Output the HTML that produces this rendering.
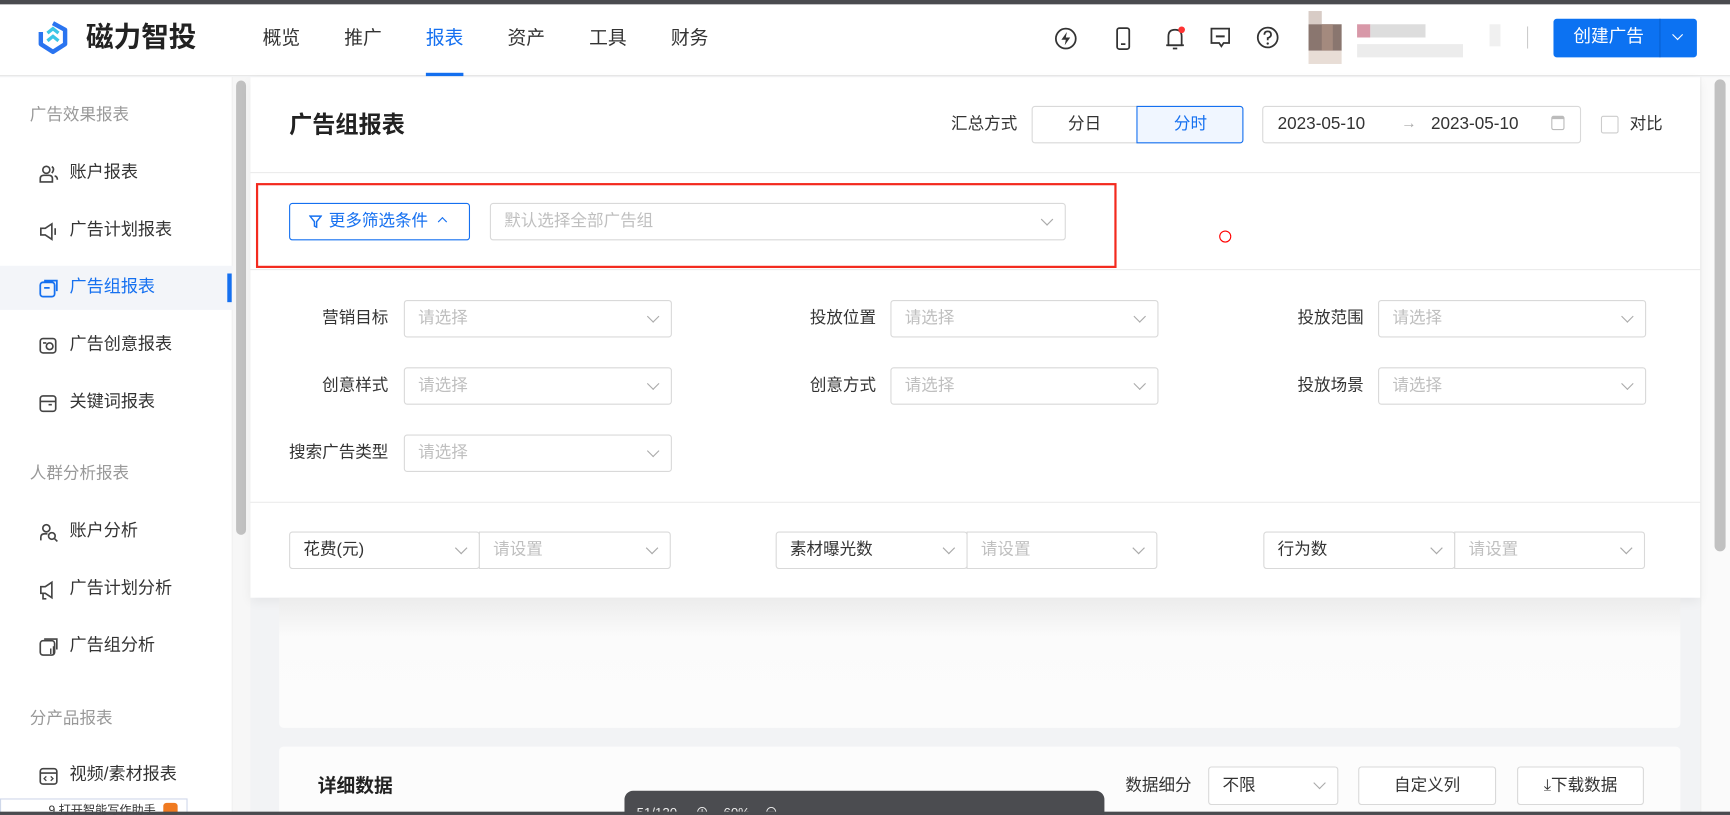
<!DOCTYPE html>
<html><head><meta charset="utf-8">
<style>
*{box-sizing:border-box;margin:0;padding:0}
html,body{width:1730px;height:815px;overflow:hidden;background:#fff}
body{font-family:"Liberation Sans","Noto Sans CJK SC",sans-serif;color:#333}
#w{position:absolute;left:0;top:0;width:1568px;height:739px;transform:scale(1.10332,1.1028);transform-origin:0 0;background:#f2f3f5;overflow:hidden}
.a{position:absolute}
.t{position:absolute;white-space:nowrap;line-height:1}
.sel{position:absolute;border:1px solid #d9d9d9;border-radius:3px;background:#fff;height:34px}
.ph{position:absolute;left:12px;top:8px;font-size:15px;color:#bfbfbf;white-space:nowrap;line-height:1}
.ar{position:absolute;right:12px;top:10px;width:8px;height:8px;border-right:1.3px solid #aaa;border-bottom:1.3px solid #aaa;transform:rotate(45deg)}
.lab{position:absolute;font-size:15px;color:#333;text-align:right;width:120px;white-space:nowrap;line-height:1}
.nav{position:absolute;top:26px;font-size:17px;color:#333;line-height:1}
.si{position:absolute;left:63px;font-size:15.5px;color:#333;white-space:nowrap;line-height:1}
.sh{position:absolute;left:27px;font-size:15px;color:#999;white-space:nowrap;line-height:1}
.ic{position:absolute;left:35px;width:17px;height:16px}
.btn{position:absolute;border:1px solid #d9d9d9;border-radius:3px;background:#fff;height:35px;font-size:15px;text-align:center;line-height:33px;color:#333}
</style></head><body>
<div id="w">
<div class="a" style="left:0;top:0;width:1568px;height:4px;background:#4a4b4f"></div>
<div class="a" style="left:0;top:4px;width:1568px;height:65px;background:#fff;border-bottom:1px solid #e8e8e8"></div>
<svg class="a" style="left:34px;top:18px" width="28" height="32" viewBox="0 0 28 32">
<path d="M14 3 L25 9 L25 22 L14 29 L3 22 L3 11" fill="none" stroke="#2a74f0" stroke-width="4" stroke-linejoin="round"/>
<path d="M9 12 L14 8 L19 12" fill="none" stroke="#3cc6e6" stroke-width="3"/>
<path d="M9 19 L14 15 L19 19" fill="none" stroke="#3cc6e6" stroke-width="3"/>
</svg>
<div class="t" style="left:78px;top:22px;font-size:25px;font-weight:bold;color:#222">磁力智投</div>
<div class="nav" style="left:238px">概览</div>
<div class="nav" style="left:312px">推广</div>
<div class="nav" style="left:386px;color:#1570f0">报表</div>
<div class="a" style="left:386px;top:66px;width:34px;height:3px;background:#1570f0"></div>
<div class="nav" style="left:460px">资产</div>
<div class="nav" style="left:534px">工具</div>
<div class="nav" style="left:608px">财务</div>
<svg class="a" style="left:955px;top:24px" width="22" height="22" viewBox="0 0 22 22"><circle cx="11" cy="11" r="9" fill="none" stroke="#333" stroke-width="1.6"/><path d="M12 5 L7 12 L11 12 L10 17 L15 10 L11 10 Z" fill="#333"/></svg>
<svg class="a" style="left:1011px;top:24px" width="14" height="22" viewBox="0 0 14 22"><rect x="1.5" y="1.5" width="11" height="19" rx="2" fill="none" stroke="#333" stroke-width="1.6"/><line x1="5" y1="16" x2="9" y2="16" stroke="#333" stroke-width="1.6"/></svg>
<svg class="a" style="left:1055px;top:23px" width="20" height="24" viewBox="0 0 20 24"><path d="M4 18 L4 10 Q4 4 10 4 Q16 4 16 10 L16 18 Z" fill="none" stroke="#333" stroke-width="1.6"/><line x1="2" y1="18" x2="18" y2="18" stroke="#333" stroke-width="1.6"/><path d="M8 21 L12 21" stroke="#333" stroke-width="1.6"/><circle cx="16" cy="4" r="3" fill="#f33"/></svg>
<svg class="a" style="left:1096px;top:24px" width="20" height="20" viewBox="0 0 20 20"><path d="M2 2 H18 V15 H13 L11 18 L9 15 H2 Z" fill="none" stroke="#333" stroke-width="1.6"/><line x1="6" y1="9" x2="14" y2="9" stroke="#333" stroke-width="1.8"/></svg>
<svg class="a" style="left:1138px;top:23px" width="22" height="22" viewBox="0 0 22 22"><circle cx="11" cy="11" r="9" fill="none" stroke="#333" stroke-width="1.6"/><path d="M8 8.5 Q8 5.5 11 5.5 Q14 5.5 14 8.5 Q14 10.5 11 11.5 L11 13.5" fill="none" stroke="#333" stroke-width="1.6"/><circle cx="11" cy="16.5" r="1.1" fill="#333"/></svg>
<div class="a" style="left:1186px;top:10px;width:12px;height:12px;background:#d8ccc6"></div>
<div class="a" style="left:1186px;top:22px;width:30px;height:24px;background:#8a766f"></div>
<div class="a" style="left:1198px;top:22px;width:10px;height:24px;background:#a48a7e"></div>
<div class="a" style="left:1186px;top:46px;width:30px;height:12px;background:#e8ddd6"></div>
<div class="a" style="left:1230px;top:22px;width:12px;height:12px;background:#d898a8"></div>
<div class="a" style="left:1242px;top:22px;width:50px;height:12px;background:#ddd"></div>
<div class="a" style="left:1230px;top:40px;width:96px;height:12px;background:#ececec"></div>
<div class="a" style="left:1350px;top:22px;width:10px;height:20px;background:#f0f0f0"></div>
<div class="a" style="left:1384px;top:24px;width:1px;height:20px;background:#ccc"></div>
<div class="a" style="left:1408px;top:17px;width:130px;height:35px;background:#0c72f2;border-radius:3px"></div>
<div class="a" style="left:1504px;top:17px;width:1px;height:35px;background:#0760d0"></div>
<div class="t" style="left:1426px;top:26px;font-size:16px;color:#fff">创建广告</div>
<div class="a" style="left:1517px;top:28px;width:7px;height:7px;border-right:1.5px solid #fff;border-bottom:1.5px solid #fff;transform:rotate(45deg)"></div>
<div class="a" style="left:0;top:70px;width:211px;height:669px;background:#fff;border-right:1px solid #eee"></div>
<div class="a" style="left:211px;top:70px;width:16px;height:669px;background:#f7f7f7"></div>
<div class="a" style="left:214px;top:73px;width:9px;height:412px;background:#c1c1c1;border-radius:5px"></div>
<div class="sh" style="top:97px">广告效果报表</div>
<div class="ic" style="top:149px"><svg width="18" height="18" viewBox="0 0 18 18"><circle cx="7" cy="5" r="3.2" fill="none" stroke="#444" stroke-width="1.5"/><path d="M1.5 16 V13 Q1.5 10 5 10 H9 Q12.5 10 12.5 13 V16 Z" fill="none" stroke="#444" stroke-width="1.5"/><path d="M12 2 Q15 4 12 8 M14.5 10.5 Q17 11 17 14" fill="none" stroke="#444" stroke-width="1.5"/></svg></div>
<div class="si" style="top:149px">账户报表</div>
<div class="ic" style="top:201px"><svg width="18" height="18" viewBox="0 0 18 18"><path d="M2 6 H6 L12 2 V16 L6 12 H2 Z" fill="none" stroke="#444" stroke-width="1.5"/><path d="M15 6 V12" stroke="#444" stroke-width="1.5"/></svg></div>
<div class="si" style="top:201px">广告计划报表</div>
<div class="a" style="left:0;top:241px;width:211px;height:40px;background:#f3f5f9"></div>
<div class="a" style="left:206px;top:248px;width:4px;height:26px;background:#1570f0"></div>
<div class="ic" style="top:253px"><svg width="18" height="18" viewBox="0 0 18 18"><rect x="1.5" y="3" width="13" height="13" rx="2.5" fill="none" stroke="#1570f0" stroke-width="1.6"/><path d="M5 1.5 H16.5 V11" fill="none" stroke="#1570f0" stroke-width="1.6"/><line x1="5" y1="8" x2="10" y2="8" stroke="#1570f0" stroke-width="1.6"/></svg></div>
<div class="si" style="top:253px;color:#1570f0">广告组报表</div>
<div class="ic" style="top:305px"><svg width="18" height="18" viewBox="0 0 18 18"><rect x="1.5" y="2" width="14" height="13" rx="2.5" fill="none" stroke="#444" stroke-width="1.5"/><circle cx="10" cy="9" r="3" fill="none" stroke="#444" stroke-width="1.5"/><line x1="4" y1="6" x2="7" y2="6" stroke="#444" stroke-width="1.5"/></svg></div>
<div class="si" style="top:305px">广告创意报表</div>
<div class="ic" style="top:357px"><svg width="18" height="18" viewBox="0 0 18 18"><rect x="1.5" y="2" width="14" height="14" rx="2.5" fill="none" stroke="#444" stroke-width="1.5"/><line x1="1.5" y1="7" x2="15.5" y2="7" stroke="#444" stroke-width="1.5"/><line x1="9" y1="10" x2="12" y2="10" stroke="#444" stroke-width="1.5"/></svg></div>
<div class="si" style="top:357px">关键词报表</div>
<div class="sh" style="top:422px">人群分析报表</div>
<div class="ic" style="top:474px"><svg width="18" height="18" viewBox="0 0 18 18"><path d="M2 16 V13 Q2 10 6 10 H8" fill="none" stroke="#444" stroke-width="1.5"/><circle cx="7" cy="5" r="3.2" fill="none" stroke="#444" stroke-width="1.5"/><circle cx="12" cy="12" r="3" fill="none" stroke="#444" stroke-width="1.5"/><line x1="14" y1="14" x2="17" y2="17" stroke="#444" stroke-width="1.5"/></svg></div>
<div class="si" style="top:474px">账户分析</div>
<div class="ic" style="top:526px"><svg width="18" height="18" viewBox="0 0 18 18"><path d="M2 6 H6 L12 2 V16 L6 12 H2 Z" fill="none" stroke="#444" stroke-width="1.5"/><path d="M4 12 V17 H7" fill="none" stroke="#444" stroke-width="1.5"/></svg></div>
<div class="si" style="top:526px">广告计划分析</div>
<div class="ic" style="top:578px"><svg width="18" height="18" viewBox="0 0 18 18"><rect x="1.5" y="3" width="13" height="13" rx="2.5" fill="none" stroke="#444" stroke-width="1.5"/><path d="M5 1.5 H16.5 V11" fill="none" stroke="#444" stroke-width="1.5"/><path d="M11 10 V15 M13.5 8 V15" stroke="#444" stroke-width="1.3"/></svg></div>
<div class="si" style="top:578px">广告组分析</div>
<div class="sh" style="top:644px">分产品报表</div>
<div class="ic" style="top:695px"><svg width="18" height="18" viewBox="0 0 18 18"><rect x="1.5" y="2" width="15" height="14" rx="2.5" fill="none" stroke="#444" stroke-width="1.5"/><line x1="1.5" y1="6" x2="16.5" y2="6" stroke="#444" stroke-width="1.5"/><path d="M7 9 L5 11 L7 13 M11 9 L13 11 L11 13" fill="none" stroke="#444" stroke-width="1.2"/></svg></div>
<div class="si" style="top:695px">视频/素材报表</div>
<div class="a" style="left:1541px;top:70px;width:27px;height:669px;background:#fafafa;border-left:1px solid #eee"></div>
<div class="a" style="left:1554px;top:72px;width:10px;height:428px;background:#c1c1c1;border-radius:5px"></div>
<div class="a" style="left:227px;top:70px;width:1314px;height:472px;background:#fff;box-shadow:0 4px 10px rgba(0,0,0,.06)"></div>
<div class="t" style="left:262px;top:103px;font-size:21px;font-weight:bold;color:#222">广告组报表</div>
<div class="t" style="left:862px;top:105px;font-size:15px">汇总方式</div>
<div class="a" style="left:935px;top:96px;width:192px;height:34px;border:1px solid #d9d9d9;border-radius:3px;background:#fff"></div>
<div class="t" style="left:968px;top:105px;font-size:15px">分日</div>
<div class="a" style="left:1030px;top:96px;width:97px;height:34px;border:1px solid #1570f0;border-radius:0 3px 3px 0;background:#f0f6ff"></div>
<div class="t" style="left:1064px;top:105px;font-size:15px;color:#1570f0">分时</div>
<div class="a" style="left:1144px;top:96px;width:289px;height:34px;border:1px solid #d9d9d9;border-radius:3px"></div>
<div class="t" style="left:1158px;top:105px;font-size:15.5px">2023-05-10</div>
<div class="t" style="left:1270px;top:104px;font-size:14px;color:#aaa">→</div>
<div class="t" style="left:1297px;top:105px;font-size:15.5px">2023-05-10</div>
<div class="a" style="left:1406px;top:105px;width:12px;height:13px;border:1.3px solid #bbb;border-radius:2px;border-top-width:3px"></div>
<div class="a" style="left:1451px;top:105px;width:16px;height:16px;border:1px solid #ccc;border-radius:2px"></div>
<div class="t" style="left:1477px;top:105px;font-size:15px">对比</div>
<div class="a" style="left:227px;top:156px;width:1314px;height:1px;background:#ebebeb"></div>
<div class="a" style="left:232px;top:166px;width:780px;height:77px;border:2.5px solid #f32a1e"></div>
<div class="a" style="left:262px;top:184px;width:164px;height:34px;border:1px solid #1570f0;border-radius:3px"></div>
<svg class="a" style="left:280px;top:195px" width="12" height="12" viewBox="0 0 12 12"><path d="M1 1 H11 L7 6 V11 L5 10 V6 Z" fill="none" stroke="#1570f0" stroke-width="1.3"/></svg>
<div class="t" style="left:298px;top:193px;font-size:15px;color:#1570f0">更多筛选条件</div>
<div class="a" style="left:398px;top:198px;width:6px;height:6px;border-left:1.3px solid #1570f0;border-top:1.3px solid #1570f0;transform:rotate(45deg)"></div>
<div class="sel" style="left:444px;top:184px;width:522px"><div class="ph">默认选择全部广告组</div><div class="ar"></div></div>
<div class="a" style="left:1105px;top:209px;width:11px;height:11px;border:1.3px solid #f00;border-radius:50%"></div>
<div class="a" style="left:227px;top:244px;width:1314px;height:1px;background:#ebebeb"></div>
<div class="lab" style="left:232px;top:281px">营销目标</div>
<div class="sel" style="left:366px;top:272px;width:243px"><div class="ph">请选择</div><div class="ar"></div></div>
<div class="lab" style="left:674px;top:281px">投放位置</div>
<div class="sel" style="left:807px;top:272px;width:243px"><div class="ph">请选择</div><div class="ar"></div></div>
<div class="lab" style="left:1116px;top:281px">投放范围</div>
<div class="sel" style="left:1249px;top:272px;width:243px"><div class="ph">请选择</div><div class="ar"></div></div>
<div class="lab" style="left:232px;top:342px">创意样式</div>
<div class="sel" style="left:366px;top:333px;width:243px"><div class="ph">请选择</div><div class="ar"></div></div>
<div class="lab" style="left:674px;top:342px">创意方式</div>
<div class="sel" style="left:807px;top:333px;width:243px"><div class="ph">请选择</div><div class="ar"></div></div>
<div class="lab" style="left:1116px;top:342px">投放场景</div>
<div class="sel" style="left:1249px;top:333px;width:243px"><div class="ph">请选择</div><div class="ar"></div></div>
<div class="lab" style="left:232px;top:403px">搜索广告类型</div>
<div class="sel" style="left:366px;top:394px;width:243px"><div class="ph">请选择</div><div class="ar"></div></div>
<div class="a" style="left:227px;top:455px;width:1314px;height:1px;background:#ebebeb"></div>
<div class="sel" style="left:262px;top:482px;width:173px"><div class="ph" style="color:#333">花费(元)</div><div class="ar"></div></div>
<div class="sel" style="left:434px;top:482px;width:174px;border-radius:0 3px 3px 0"><div class="ph">请设置</div><div class="ar"></div></div>
<div class="sel" style="left:703px;top:482px;width:174px"><div class="ph" style="color:#333">素材曝光数</div><div class="ar"></div></div>
<div class="sel" style="left:876px;top:482px;width:173px;border-radius:0 3px 3px 0"><div class="ph">请设置</div><div class="ar"></div></div>
<div class="sel" style="left:1145px;top:482px;width:174px"><div class="ph" style="color:#333">行为数</div><div class="ar"></div></div>
<div class="sel" style="left:1318px;top:482px;width:173px;border-radius:0 3px 3px 0"><div class="ph">请设置</div><div class="ar"></div></div>
<div class="a" style="left:253px;top:542px;width:1270px;height:118px;background:linear-gradient(#ececec,#fbfbfb 30%,#fcfcfc);border-radius:0 0 4px 4px"></div>
<div class="a" style="left:253px;top:677px;width:1270px;height:70px;background:#fcfcfc;border-radius:4px"></div>
<div class="t" style="left:288px;top:704px;font-size:17px;font-weight:bold;color:#222">详细数据</div>
<div class="t" style="left:1020px;top:705px;font-size:15px">数据细分</div>
<div class="sel" style="left:1095px;top:695px;width:118px;height:35px"><div class="ph" style="color:#333;top:9px">不限</div><div class="ar"></div></div>
<div class="btn" style="left:1231px;top:695px;width:125px">自定义列</div>
<div class="btn" style="left:1375px;top:695px;width:115px">⤓下载数据</div>
<div class="a" style="left:566px;top:717px;width:435px;height:30px;background:#4b4c50;border-radius:8px 8px 0 0"></div>
<div class="t" style="left:577px;top:731px;font-size:12px;color:#eee">51/120 &nbsp;&nbsp;&nbsp;&nbsp;⊕ &nbsp;&nbsp;&nbsp;60% &nbsp;&nbsp;&nbsp;⊖</div>
<div class="a" style="left:0;top:724px;width:170px;height:20px;background:#fff;border:1px solid #cfd8ea"></div>
<div class="t" style="left:44px;top:730px;font-size:11px;color:#333">9.打开智能写作助手</div>
<div class="a" style="left:148px;top:728px;width:13px;height:12px;background:#f07a20;border-radius:3px"></div>
<div class="a" style="left:0;top:736px;width:1568px;height:3px;background:#4a4b4f"></div>
</div>
</body></html>
